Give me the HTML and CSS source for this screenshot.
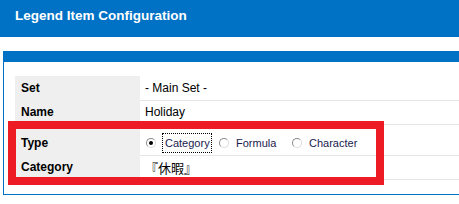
FILE: index.html
```html
<!DOCTYPE html>
<html lang="en">
<head>
    <meta charset="UTF-8">
    <title>Legend Item Configuration</title>
    <link rel="stylesheet" href="styles.css">
</head>
<body>
    <div class="header">
        <h1>Legend Item Configuration</h1>
    </div>

    <div class="panel">
        <div class="panel-bar"></div>
        <div class="panel-body">
            <table class="form-table">
                <tr>
                    <th>Set</th>
                    <td>- Main Set -</td>
                </tr>
                <tr>
                    <th>Name</th>
                    <td>Holiday</td>
                </tr>
                <tr>
                    <th>Type</th>
                    <td>
                        <div class="radios">
                            <label class="radio"><input type="radio" name="type" checked><span class="focus">Category</span></label>
                            <label class="radio"><input type="radio" name="type"><span>Formula</span></label>
                            <label class="radio"><input type="radio" name="type"><span>Character</span></label>
                        </div>
                    </td>
                </tr>
                <tr>
                    <th>Category</th>
                    <td class="cjk">『休暇』</td>
                </tr>
            </table>
            <div class="highlight"></div>
        </div>
    </div>
</body>
</html>
```

FILE: styles.css
```css
* {
    margin: 0;
    padding: 0;
    box-sizing: border-box;
}

body {
    font-family: 'Liberation Sans', Arial, sans-serif;
    font-size: 12px;
    color: #000;
    background: #fff;
    width: 459px;
    height: 204px;
    overflow: hidden;
}

.header {
    background: #0072c6;
    height: 37px;
    padding: 8px 15px 0;
}

.header h1 {
    color: #fff;
    font-size: 13.5px;
    font-weight: bold;
    line-height: 16px;
}

.panel {
    margin: 14px 0 0 3px;
    border-left: 1px solid #0072c6;
    border-bottom: 1px solid #0072c6;
    height: 144px;
}

.panel-bar {
    background: #0072c6;
    height: 11px;
    margin-left: -1px;
}

.panel-body {
    position: relative;
    padding: 14px 0 0 11px;
}

.form-table {
    width: 100%;
    border-collapse: collapse;
}

.form-table th {
    width: 125px;
    background: #efefef;
    text-align: left;
    font-weight: bold;
    padding: 0 0 0 6px;
    height: 24px;
    border-bottom: 1px solid #efefef;
}

.form-table td {
    padding: 0 0 0 5px;
    height: 24px;
    border-bottom: 1px solid #e6e6e6;
}

.form-table tr:nth-child(3) th,
.form-table tr:nth-child(3) td {
    height: 31px;
    padding-top: 7px;
}

.cjk {
    font-family: 'Noto Sans CJK JP', 'Liberation Sans', sans-serif;
    font-size: 13px;
}

.radios {
    display: flex;
    align-items: center;
    padding-left: 1px;
}

.radio {
    width: 73px;
    display: flex;
    align-items: center;
    gap: 7px;
    font-size: 11px;
    color: #1a1a4e;
}

.radio input {
    appearance: none;
    flex: none;
    width: 10px;
    height: 10px;
    border-radius: 50%;
    border: 1px solid #8c8c8c;
    border-right-color: #dcdcdc;
    border-bottom-color: #dcdcdc;
    background: #fff;
    margin: 0;
    position: relative;
}

.radio input:checked::after {
    content: "";
    position: absolute;
    left: 2px;
    top: 2px;
    width: 4px;
    height: 4px;
    border-radius: 50%;
    background: #000;
}

.focus {
    outline: 1px dotted #000;
    padding: 3px 1px 3px 2px;
}

.highlight {
    position: absolute;
    left: 4px;
    top: 59px;
    width: 376px;
    height: 64px;
    border: 8px solid #ed1c24;
}
```
